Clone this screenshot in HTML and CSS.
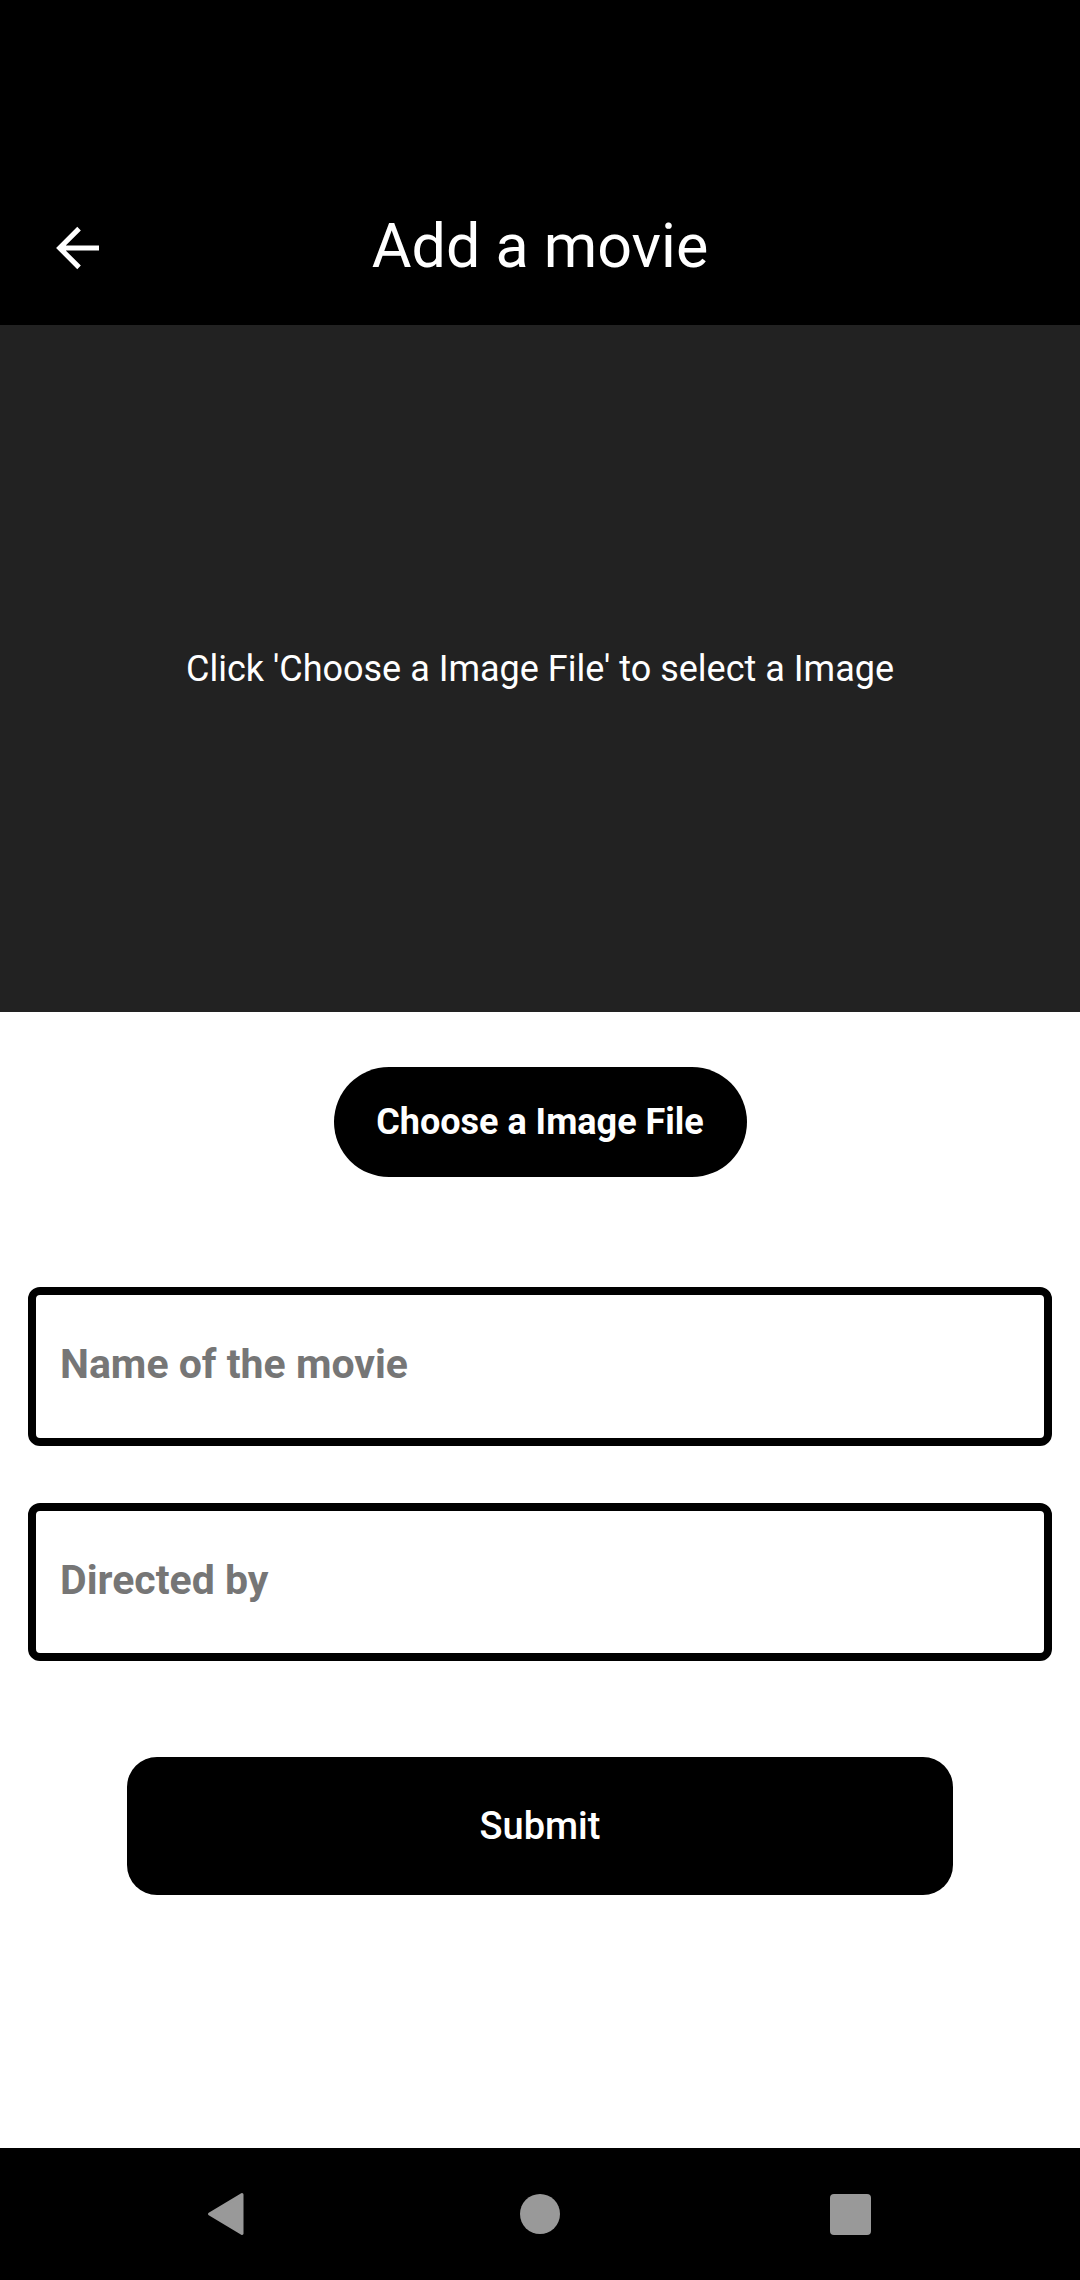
FILE: index.html
```html
<!DOCTYPE html>
<html>
<head>
<meta charset="utf-8">
<link rel="stylesheet" href="styles.css">
</head>
<body>
<div class="screen">
  <header class="topbar">
    <button class="back" aria-label="Back">
      <svg viewBox="0 0 24 24" width="66" height="66"><path fill="#fff" d="M20 11.1H7.9l5.5-5.5L12.1 4.3 4.4 12l7.7 7.7 1.3-1.3-5.5-5.5H20z"/></svg>
    </button>
    <h1 class="title">Add a movie</h1>
  </header>
  <section class="preview">
    <p class="preview-text">Click 'Choose a Image File' to select a Image</p>
  </section>
  <main class="form">
    <button class="choose">Choose a Image File</button>
    <input class="field field-first" type="text" placeholder="Name of the movie">
    <input class="field field-second" type="text" placeholder="Directed by">
    <button class="submit">Submit</button>
  </main>
  <nav class="navbar">
    <svg class="nav-back" viewBox="0 0 38 44" width="38" height="44"><path fill="#999" stroke="#999" stroke-width="3" stroke-linejoin="round" d="M35 2.5 L2.5 22 L35 41.5 Z"/></svg>
    <span class="nav-home"></span>
    <span class="nav-recent"></span>
  </nav>
</div>
</body>
</html>
```
FILE: styles.css
```css
html, body {
  margin: 0;
  padding: 0;
  background: #fff;
}
.screen {
  width: 1080px;
  height: 2280px;
  display: flex;
  flex-direction: column;
  font-family: Roboto, "Noto Sans", sans-serif;
}
.topbar {
  height: 325px;
  background: #000;
  display: flex;
  align-items: flex-start;
  justify-content: center;
  position: relative;
  box-sizing: border-box;
}
.back {
  position: absolute;
  left: 44px;
  top: 215px;
  width: 66px;
  height: 66px;
  padding: 0;
  border: 0;
  background: none;
  display: block;
}
.back svg { display: block; }
.title {
  margin: 0;
  margin-top: 210px;
  font-size: 61px;
  font-weight: 400;
  color: #fff;
  line-height: 72px;
}
.preview {
  height: 687px;
  background: #222222;
  display: flex;
  align-items: center;
  justify-content: center;
}
.preview-text {
  margin: 0;
  color: #fff;
  font-size: 36px;
  line-height: 42px;
}
.form {
  display: flex;
  flex-direction: column;
  align-items: center;
  flex: 1;
}
.choose {
  margin-top: 55px;
  width: 413px;
  height: 110px;
  border: 0;
  border-radius: 55px;
  background: #000;
  color: #fff;
  font-family: Roboto, sans-serif;
  font-weight: 700;
  font-size: 36px;
  padding: 0;
}
.field {
  width: 1024px;
  box-sizing: border-box;
  border: 8px solid #000;
  border-radius: 12px;
  padding: 0 0 5px 24px;
  font-family: Roboto, sans-serif;
  font-size: 41px;
  font-weight: 700;
  color: #000;
  background: #fff;
  outline: none;
}
.field::placeholder {
  color: #767676;
  font-weight: 700;
}
.field-first {
  margin-top: 110px;
  height: 159px;
}
.field-second {
  margin-top: 57px;
  height: 158px;
}
.submit {
  margin-top: 96px;
  width: 826px;
  height: 138px;
  border: 0;
  border-radius: 30px;
  background: #000;
  color: #fff;
  font-family: Roboto, sans-serif;
  font-weight: 500;
  font-size: 38px;
  padding: 0;
}
.navbar {
  height: 132px;
  background: #000;
  position: relative;
}
.nav-back {
  position: absolute;
  left: 207px;
  top: 44px;
}
.nav-home {
  position: absolute;
  left: 520px;
  top: 46px;
  width: 40px;
  height: 40px;
  border-radius: 50%;
  background: #999;
}
.nav-recent {
  position: absolute;
  left: 830px;
  top: 46px;
  width: 41px;
  height: 41px;
  border-radius: 4px;
  background: #999;
}
```
